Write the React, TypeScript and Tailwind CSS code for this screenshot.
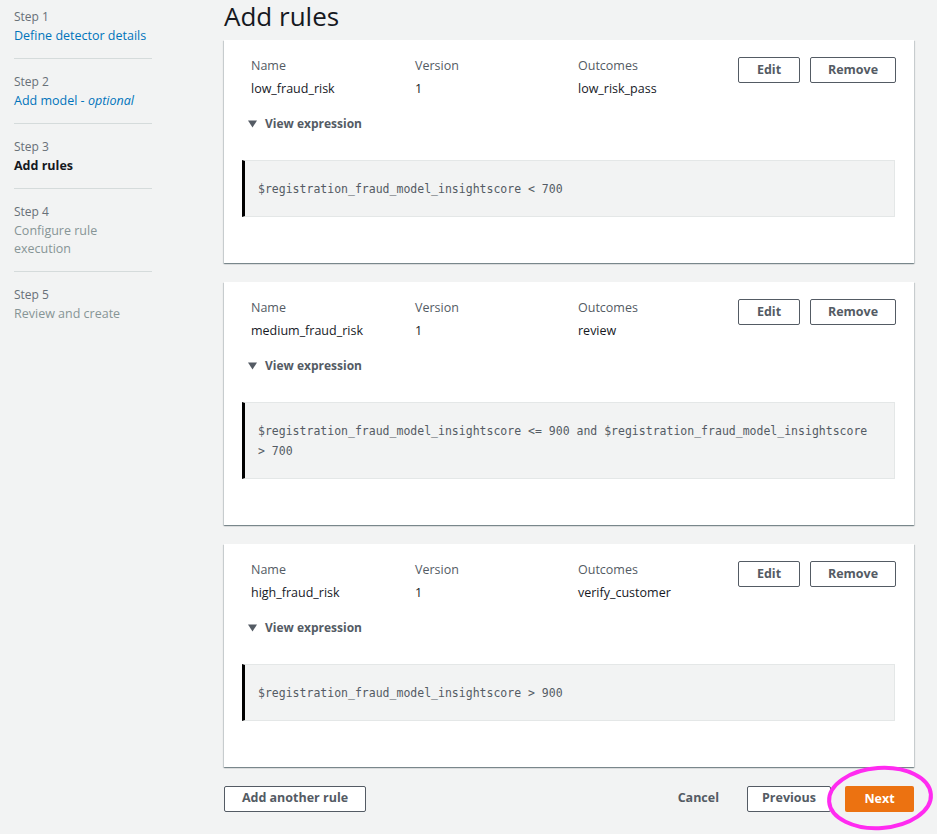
import React from "react";

interface Rule {
  name: string;
  version: string;
  outcome: string;
  expression: string;
}

const rules: Rule[] = [
  {
    name: "low_fraud_risk",
    version: "1",
    outcome: "low_risk_pass",
    expression: "$registration_fraud_model_insightscore < 700",
  },
  {
    name: "medium_fraud_risk",
    version: "1",
    outcome: "review",
    expression:
      "$registration_fraud_model_insightscore <= 900 and $registration_fraud_model_insightscore > 700",
  },
  {
    name: "high_fraud_risk",
    version: "1",
    outcome: "verify_customer",
    expression: "$registration_fraud_model_insightscore > 900",
  },
];

const steps = [
  { step: "Step 1", label: "Define detector details", state: "link" },
  { step: "Step 2", label: "Add model", optional: true, state: "link" },
  { step: "Step 3", label: "Add rules", state: "current" },
  { step: "Step 4", label: "Configure rule execution", state: "disabled" },
  { step: "Step 5", label: "Review and create", state: "disabled" },
];

const Sidebar: React.FC = () => (
  <nav className="w-[138px] shrink-0 pt-2">
    {steps.map((s, i) => (
      <div
        key={s.step}
        className={
          i === 0
            ? "pb-[13px] border-b border-[#d5dbdb]"
            : i === steps.length - 1
            ? "pt-[14px]"
            : "pt-[14px] pb-[13px] border-b border-[#d5dbdb]"
        }
      >
        <div className="text-[12px] leading-[18px] text-[#687078]">{s.step}</div>
        {s.state === "link" && (
          <div className="text-[12.5px] leading-[18px] pt-px text-[#0073bb]">
            {s.label}
            {s.optional && (
              <>
                {" - "}
                <i>optional</i>
              </>
            )}
          </div>
        )}
        {s.state === "current" && (
          <div className="text-[12.5px] leading-[18px] pt-px font-bold text-[#16191f]">{s.label}</div>
        )}
        {s.state === "disabled" && (
          <div className="text-[12.5px] leading-[18px] pt-px text-[#879596] max-w-[112px]">{s.label}</div>
        )}
      </div>
    ))}
  </nav>
);

const OutlineButton: React.FC<{ children: React.ReactNode; className?: string }> = ({
  children,
  className = "",
}) => (
  <button
    className={`h-[26px] border border-[#545b64] rounded-[2px] bg-white text-[12.5px] font-bold text-[#545b64] ${className}`}
  >
    {children}
  </button>
);

const RuleCard: React.FC<{ rule: Rule }> = ({ rule }) => (
  <section className="bg-white shadow-[0_1px_1px_0_rgba(0,28,36,0.35),1px_1px_1px_0_rgba(0,28,36,0.12),-1px_1px_1px_0_rgba(0,28,36,0.12)] pt-[14px] pb-[46px]">
    <div className="flex pl-[27px] pr-[19px]">
      <div className="grid grid-cols-[164px_163px_160px] text-[12.5px] leading-[23px]">
        <div className="text-[#545b64]">Name</div>
        <div className="text-[#545b64]">Version</div>
        <div className="text-[#545b64]">Outcomes</div>
        <div className="text-[#16191f]">{rule.name}</div>
        <div className="text-[#16191f]">{rule.version}</div>
        <div className="text-[#16191f]">{rule.outcome}</div>
      </div>
      <div className="ml-auto flex gap-[10px] mt-[3px]">
        <OutlineButton className="w-[62px]">Edit</OutlineButton>
        <OutlineButton className="w-[86px]">Remove</OutlineButton>
      </div>
    </div>
    <div className="flex items-center gap-[8px] pl-[24px] mt-[14px] text-[12px] leading-[20px] font-bold text-[#545b64]">
      <svg width="9" height="8" viewBox="0 0 9 8" aria-hidden="true">
        <path d="M0 0.5h9L4.5 7.5z" fill="#545b64" />
      </svg>
      <span>View expression</span>
    </div>
    <div className="mx-[18px] mr-[19px] mt-[26px] bg-[#f2f3f3] border border-[#e4e7e7] border-l-[3px] border-l-black pl-[13px] pr-[20px] pt-[18px] pb-[17px]">
      <p className="font-['DejaVu_Sans_Mono',monospace] text-[11.5px] leading-[20px] text-[#545b64]">
        {rule.expression}
      </p>
    </div>
  </section>
);

export default function App() {
  return (
    <div className="min-h-[834px] bg-[#f2f3f3] font-['Open_Sans',sans-serif] flex pl-[14px] pr-[23px]">
      <Sidebar />
      <main className="ml-[72px] w-[690px]">
        <h1 className="text-[26px] leading-[33px] text-[#16191f] mb-[7px]">Add rules</h1>
        <div className="flex flex-col gap-[19px]">
          {rules.map((r) => (
            <RuleCard key={r.name} rule={r} />
          ))}
        </div>
        <div className="flex items-center mt-[18px]">
          <OutlineButton className="w-[142px]">Add another rule</OutlineButton>
          <div className="ml-auto flex items-center">
            <span className="text-[12.5px] font-bold text-[#545b64] mr-[28px]">Cancel</span>
            <OutlineButton className="w-[84px]">Previous</OutlineButton>
            <div className="relative ml-[14px]">
              <button className="h-[26px] w-[69px] rounded-[2px] bg-[#ec7211] text-[12.5px] font-bold text-white">
                Next
              </button>
              <svg
                className="absolute left-[-20px] top-[-22px] pointer-events-none"
                width="110"
                height="70"
                viewBox="0 0 110 70"
                aria-hidden="true"
              >
                <ellipse
                  cx="55"
                  cy="35"
                  rx="51"
                  ry="30"
                  fill="none"
                  stroke="#ff2bf0"
                  strokeWidth="4"
                  transform="rotate(-4 55 35)"
                />
              </svg>
            </div>
          </div>
        </div>
      </main>
    </div>
  );
}
